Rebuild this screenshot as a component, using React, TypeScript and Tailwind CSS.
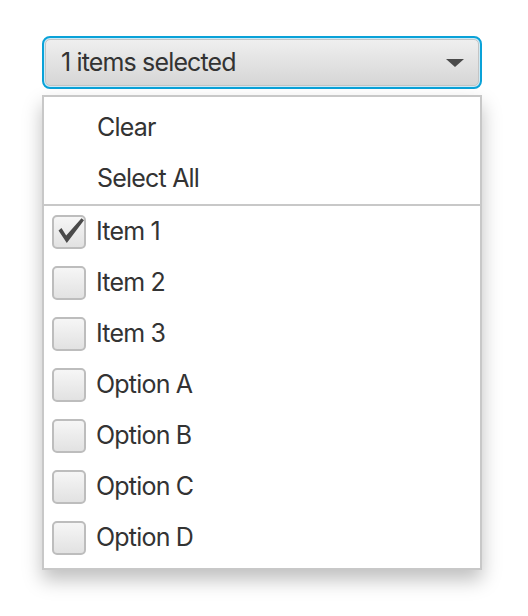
import { useState } from 'react';

const items = ['Item 1', 'Item 2', 'Item 3', 'Option A', 'Option B', 'Option C', 'Option D'];

function CheckBox({ checked }: { checked: boolean }) {
  return (
    <div className="relative w-[34px] h-[34px] rounded-[5px] border-2 border-[#bdbdbd] bg-gradient-to-b from-[#f6f6f6] to-[#e2e2e2] shrink-0">
      {checked && (
        <svg className="absolute -left-[2px] -top-[2px] w-[34px] h-[34px]" viewBox="0 0 34 34">
          <path d="M6.5 15.5 L9.5 13 L14.2 20.5 L29.5 3.2 L32 5.2 L14.8 28 Z" fill="#4a4a4a" />
        </svg>
      )}
    </div>
  );
}

export default function App() {
  const [selected, setSelected] = useState<string[]>(['Item 1']);

  const toggle = (name: string) => {
    setSelected((prev) => (prev.includes(name) ? prev.filter((n) => n !== name) : [...prev, name]));
  };

  return (
    <div
      className="w-full h-[616px] bg-white pt-[36px] pl-[42px] text-[#333333]"
      style={{ fontFamily: 'Inter, "Liberation Sans", sans-serif' }}
    >
      <div className="w-[440px]">
        {/* Combo button with focus ring */}
        <div className="rounded-[8px] border-2 border-[#0aa2d8] p-[1px] bg-[#cdebf7]">
          <div className="h-[47px] rounded-[5px] border border-[#c4c4c4] bg-gradient-to-b from-[#efefef] to-[#d6d6d6] flex items-center justify-between pl-[15px] pr-[14px]">
            <span className="text-[25px] tracking-[-0.85px]">{selected.length} items selected</span>
            <svg width="18" height="8" viewBox="0 0 18 8">
              <path d="M0 0 H18 L9 8 Z" fill="#4a4a4a" />
            </svg>
          </div>
        </div>

        {/* Popup */}
        <div className="mt-[6px] border-2 border-[#c8c8c8] bg-white py-[5px] shadow-[0_10px_18px_rgba(0,0,0,0.25)]">
          <div className="h-[51px] flex items-center pl-[53px] text-[25px] tracking-[-0.8px]" onClick={() => setSelected([])}>
            Clear
          </div>
          <div className="h-[51px] flex items-center pl-[53px] text-[25px] tracking-[-0.8px]" onClick={() => setSelected(items)}>
            Select All
          </div>
          <div className="h-[2px] bg-[#c8c8c8]" />
          {items.map((name) => (
            <div
              key={name}
              className="h-[51px] flex items-center gap-[10px] pl-[8px] text-[25px] tracking-[-0.8px]"
              onClick={() => toggle(name)}
            >
              <CheckBox checked={selected.includes(name)} />
              <span>{name}</span>
            </div>
          ))}
        </div>
      </div>
    </div>
  );
}
